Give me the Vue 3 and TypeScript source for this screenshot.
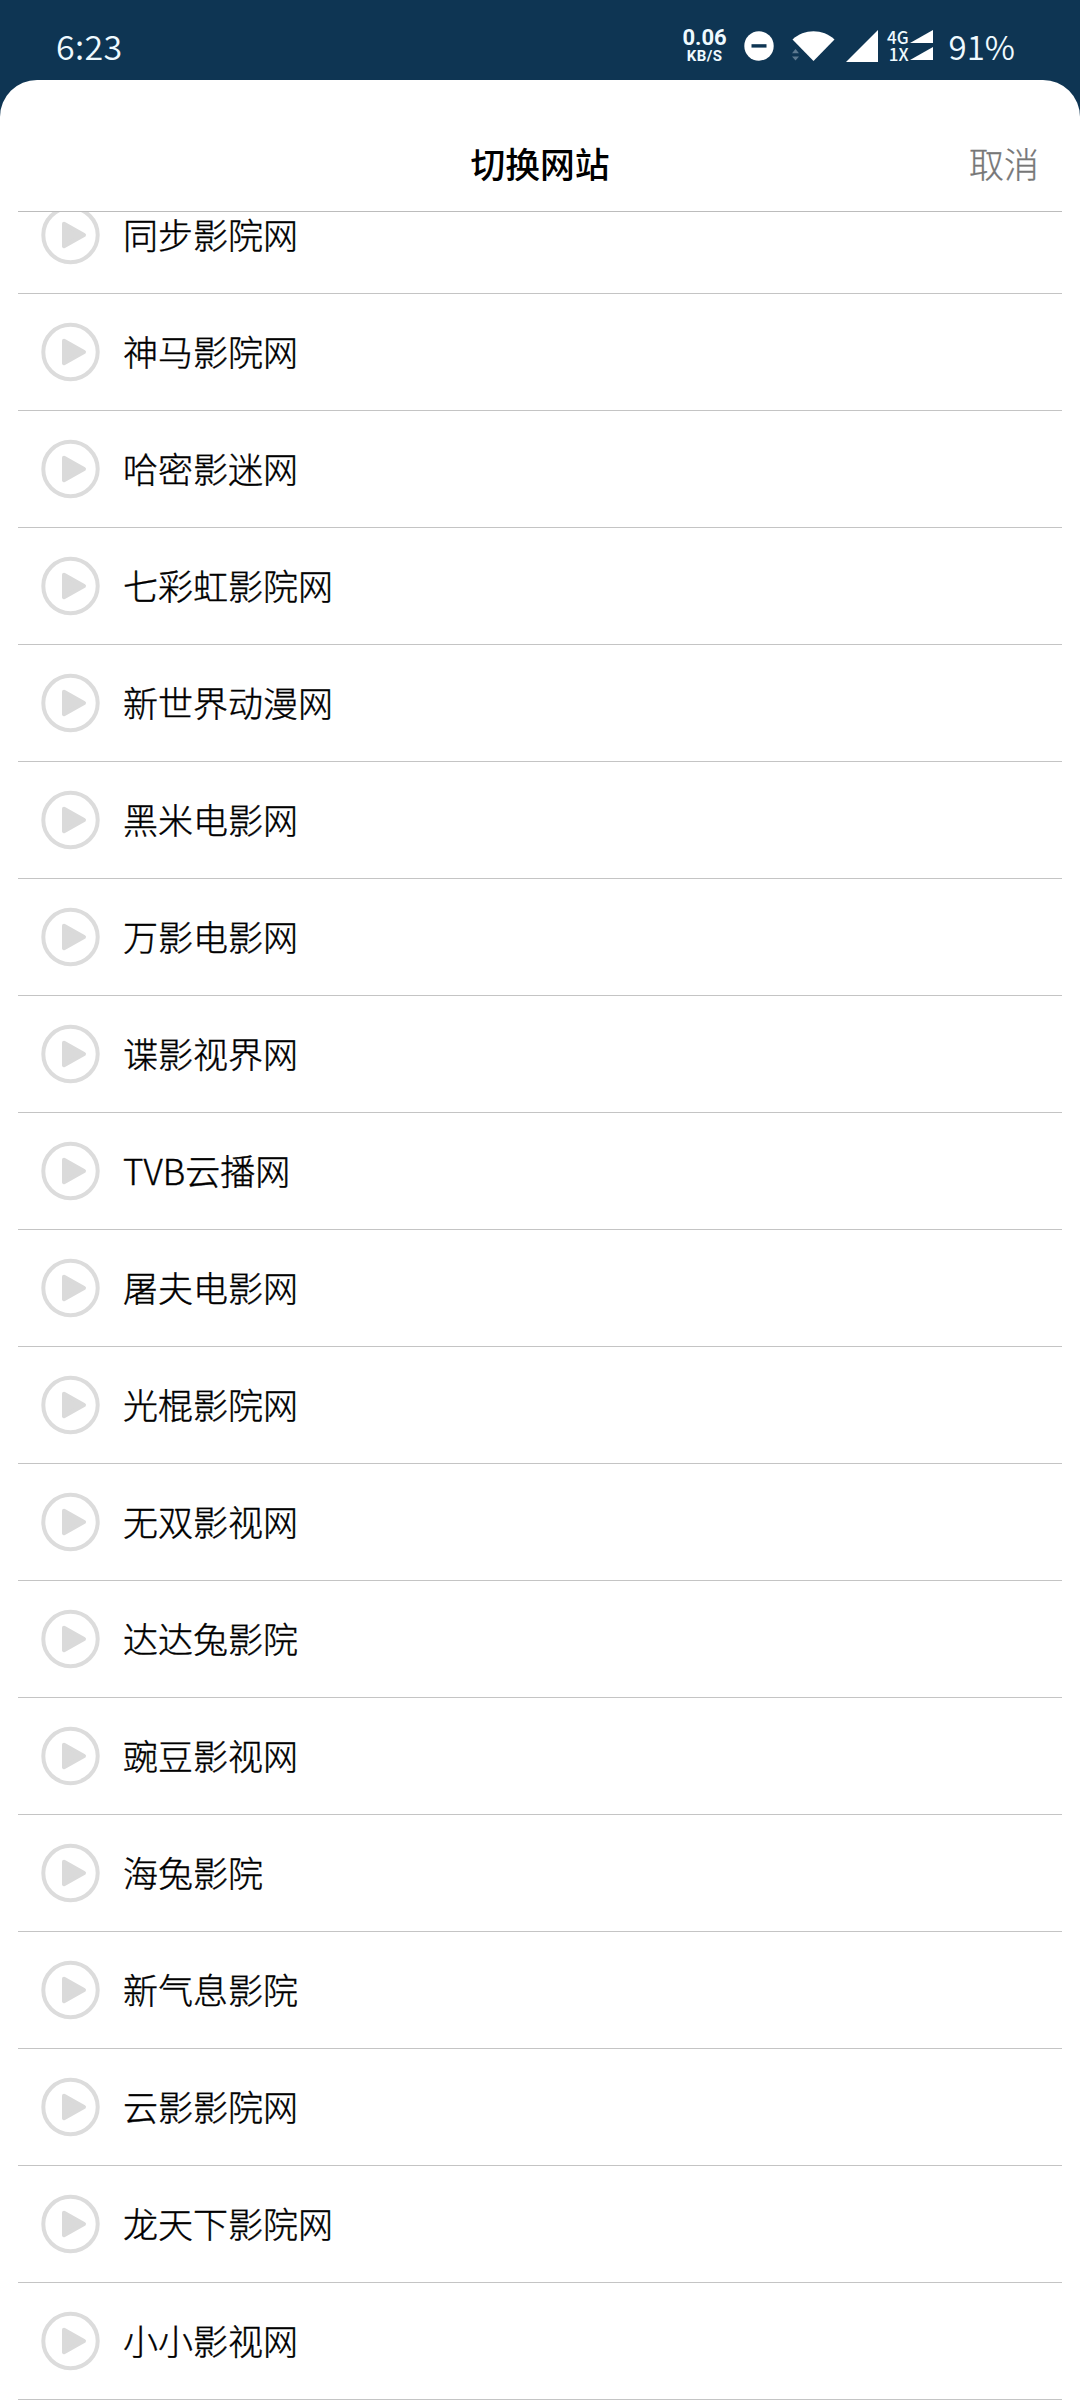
<script setup lang="ts">
const sites: string[] = [
  '同步影院网', '神马影院网', '哈密影迷网', '七彩虹影院网', '新世界动漫网',
  '黑米电影网', '万影电影网', '谍影视界网', 'TVB云播网', '屠夫电影网',
  '光棍影院网', '无双影视网', '达达兔影院', '豌豆影视网', '海兔影院',
  '新气息影院', '云影影院网', '龙天下影院网', '小小影视网',
]
</script>

<template>
  <div class="screen">
    <div class="status">
      <span class="time">6:23</span>
      <div class="indicators">
        <div class="speed"><b>0.06</b><small>KB/S</small></div>
        <svg class="dnd" width="30" height="30" viewBox="0 0 30 30">
          <circle cx="15" cy="15" r="14.7" fill="#fff" />
          <rect x="7.5" y="13.2" width="15" height="3.4" fill="#0e3553" />
        </svg>
        <svg class="wifi" width="43" height="32" viewBox="0 0 43 32">
          <path d="M.5 9.500C12-1.500 31-1.500 42.500 9.500L21.500 31Z" fill="#fff" />
          <path d="M0 23.300L3.500 19L7 23.300ZM0 26.500L3.500 30.500L7 26.500Z" fill="#5c7990" />
        </svg>
        <svg class="signal" width="32" height="32" viewBox="0 0 32 32">
          <path d="M0 32L32 0V32Z" fill="#fff" />
        </svg>
        <div class="nets">
          <div class="net"><span>4G</span><svg width="23" height="13" viewBox="0 0 23 13"><path d="M0 13L23 0V13Z" fill="#fff" /></svg></div>
          <div class="net"><span>1X</span><svg width="23" height="13" viewBox="0 0 23 13"><path d="M0 13L23 0V13Z" fill="#fff" /></svg></div>
        </div>
        <span class="battery">91%</span>
      </div>
    </div>
    <div class="sheet">
      <header class="head">
        <span class="side"></span>
        <h1>切换网站</h1>
        <span class="side cancel">取消</span>
      </header>
      <ul class="list">
        <li v-for="site in sites" :key="site">
          <svg width="60" height="60" viewBox="0 0 60 60">
            <circle cx="30.500" cy="30" r="27.200" fill="none" stroke="#dcdcdc" stroke-width="4" />
            <path d="M24 18.800L44 30L24 41.200Z" fill="#dadada" stroke="#dadada" stroke-width="4" stroke-linejoin="round" />
          </svg>
          <span class="name">{{ site }}</span>
        </li>
      </ul>
    </div>
  </div>
</template>

<style>
body {
  background: #0e3553;
}
</style>

<style scoped>
.screen {
  width: 1080px;
  height: 2400px;
  overflow: hidden;
  display: flex;
  flex-direction: column;
  background: #0e3553;
  font-family: "Noto Sans CJK SC", sans-serif;
}
.status {
  height: 80px;
  flex: none;
  box-sizing: border-box;
  padding: 12px 66px 0 56px;
  display: flex;
  justify-content: space-between;
  align-items: center;
  color: #effaff;
}
.time {
  font-size: 34px;
  font-weight: 350;
  line-height: 40px;
  letter-spacing: 0.3px;
  margin-top: -1px;
}
.indicators {
  display: flex;
  align-items: center;
  height: 68px;
}
.speed {
  font-family: Roboto, sans-serif;
  display: flex;
  flex-direction: column;
  align-items: center;
  width: 44px;
  margin: -2px 17px 0 0;
}
.speed b {
  font-size: 22px;
  line-height: 22px;
}
.speed small {
  font-size: 15px;
  font-weight: 700;
  line-height: 15px;
  letter-spacing: 0.5px;
}
.wifi {
  margin-left: 18px;
}
.signal {
  margin-left: 11px;
}
.nets {
  margin: -2px 0 0 8px;
}
.net {
  display: flex;
  align-items: center;
  justify-content: flex-end;
  height: 17px;
}
.net span {
  width: 23px;
  margin-right: 1px;
  font-size: 17px;
  font-weight: 500;
  line-height: 17px;
  text-align: right;
}
.battery {
  margin: -1px 0 0 16px;
  font-size: 33px;
  line-height: 40px;
  font-weight: 350;
  margin-right: -1px;
}
.sheet {
  flex: 1;
  min-height: 0;
  background: #fff;
  border-radius: 37px 37px 0 0;
  padding: 0 18px;
  display: flex;
  flex-direction: column;
}
.head {
  height: 132px;
  box-sizing: border-box;
  flex: none;
  padding: 35px 23px 0;
  border-bottom: 1px solid #bcbcbc;
  display: flex;
  justify-content: space-between;
}
h1 {
  margin: 0;
  font-size: 34.800px;
  line-height: 96px;
  font-weight: 500;
  color: #000;
}
.side {
  width: 120px;
  line-height: 96px;
}
.cancel {
  font-size: 35px;
  font-weight: 300;
  -webkit-text-stroke: 0.3px #777;
  color: #777;
  text-align: right;
}
.list {
  flex: 1;
  min-height: 0;
  overflow: hidden;
  margin: 0;
  padding: 0;
  list-style: none;
}
li {
  height: 117px;
  box-sizing: border-box;
  border-bottom: 1px solid #c4c4c4;
  display: flex;
  align-items: center;
  padding-left: 22px;
}
li:first-child {
  margin-top: -35px;
}
.name {
  margin: -2px 0 0 23px;
  font-size: 35px;
  font-weight: 300;
  -webkit-text-stroke: 0.4px #000;
  line-height: 52px;
  color: #000;
}
</style>
